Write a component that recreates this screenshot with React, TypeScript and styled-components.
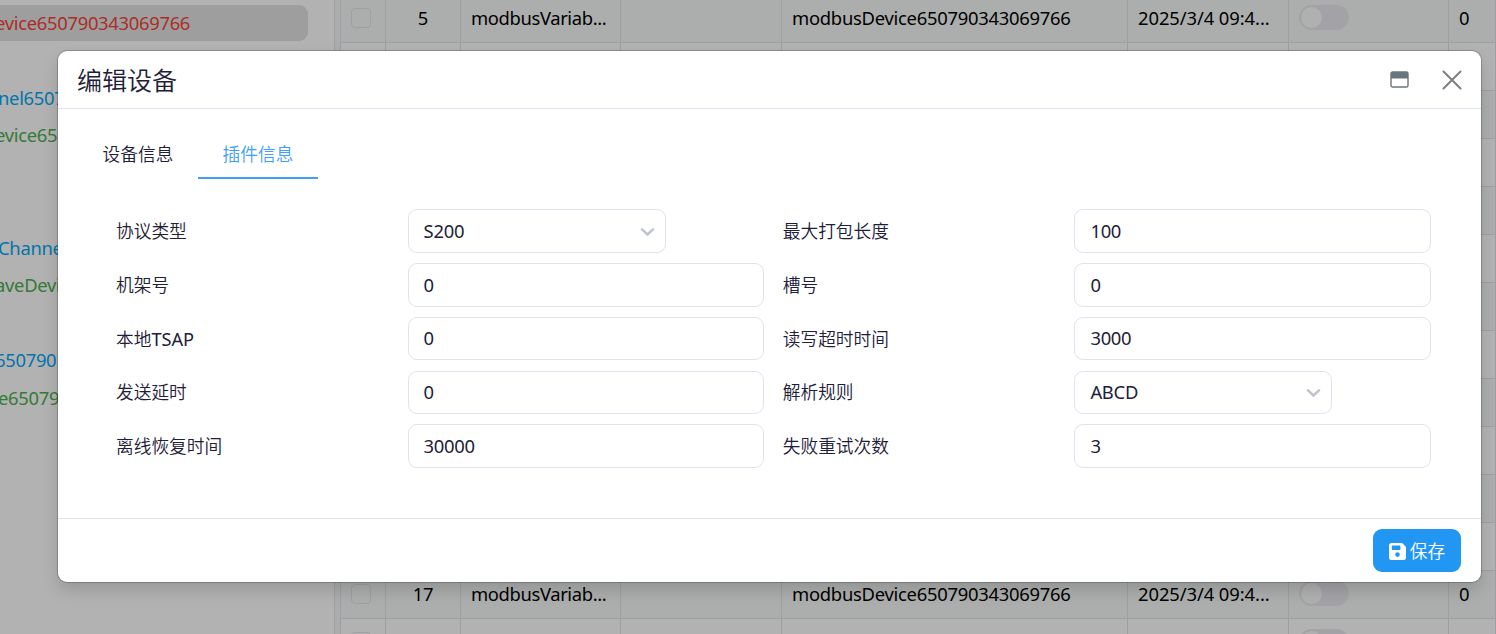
import React from 'react';
import styled, { createGlobalStyle } from 'styled-components';

const GlobalStyle = createGlobalStyle`
  * { box-sizing: border-box; }
  body {
    margin: 0;
    overflow: hidden;
    background: #fff;
    font-family: 'Noto Sans', 'Noto Sans CJK SC', sans-serif;
    font-size: 17.7px;
    color: #1d2037;
  }
`;

const Page = styled.div`
  position: relative;
  display: flex;
  width: 100vw;
  height: 634px;
  overflow: hidden;
`;

const Sidebar = styled.aside`
  width: 334px;
  padding-top: 4.5px;
  overflow: hidden;
`;

const TreeItem = styled.div<{ $color?: string; $active?: boolean }>`
  display: flex;
  align-items: center;
  width: 308px;
  height: 36.5px;
  margin-bottom: 1px;
  padding-bottom: 1px;
  border-radius: 0 9px 9px 0;
  white-space: nowrap;
  font-size: 18.4px;
  letter-spacing: -0.3px;
  color: ${(p) => p.$color ?? 'inherit'};
  background: ${(p) => (p.$active ? '#e3e3e3' : 'transparent')};
`;

const TreeText = styled.span<{ $shift: number }>`
  margin-left: ${(p) => p.$shift}px;
`;

const Splitter = styled.div`
  width: 7px;
  border: solid #e2e2ea;
  border-width: 0 1px;
  background: #f6f6fb;
`;

const Table = styled.div`
  flex: 1;
  margin-top: -5px;
  overflow: hidden;
`;

const Row = styled.div<{ $striped: boolean }>`
  display: grid;
  grid-template-columns: 45px 75px 160px 161px 346px 161px 160px 1fr;
  height: 48px;
  background: ${(p) => (p.$striped ? '#f7faf8' : '#fff')};
`;

const Cell = styled.div<{ $center?: boolean; $spacing?: number }>`
  display: flex;
  align-items: center;
  justify-content: ${(p) => (p.$center ? 'center' : 'flex-start')};
  padding: 0 ${(p) => (p.$center ? 0 : 10)}px 2px;
  border: solid #e2e2ea;
  border-width: 0 1px 1px 0;
  color: #000;
  white-space: nowrap;
  font-size: 18.4px;
  letter-spacing: ${(p) => p.$spacing ?? -0.26}px;
`;

const Checkbox = styled.span`
  width: 20px;
  height: 20px;
  margin-right: 4px;
  border: 1px solid #e2e2ea;
  border-radius: 4px;
`;

const Switch = styled.span`
  display: flex;
  align-items: center;
  width: 50px;
  height: 25px;
  padding: 2px;
  border-radius: 13px;
  background: #e9e9ef;
  &::before {
    content: '';
    width: 21px;
    height: 21px;
    border-radius: 50%;
    background: #fbfcfb;
  }
`;

const Backdrop = styled.div`
  position: absolute;
  inset: 0;
  padding: 51px 15px 52px 58px;
  background: rgba(0, 0, 0, 0.3);
`;

const Dialog = styled.section`
  display: flex;
  flex-direction: column;
  height: 531px;
  border-radius: 9px;
  background: #fff;
  box-shadow: 0 0 0 1px rgba(0, 0, 0, 0.2), 0 8px 16px rgba(0, 0, 0, 0.15);
`;

const Header = styled.header`
  display: flex;
  align-items: center;
  height: 58px;
  padding: 0 19px;
  border-bottom: 1px solid #e2e2ee;
`;

const Title = styled.h1`
  flex: 1;
  margin: 0;
  padding-bottom: 2px;
  font-size: 25px;
  font-weight: 350;
`;

const WindowIcon = styled.svg`
  width: 19px;
  height: 17px;
  margin-right: 33px;
`;

const CloseIcon = styled.svg`
  width: 20px;
  height: 20px;
`;

const Body = styled.div`
  flex: 1;
  padding: 21px 50px 0 20px;
`;

const Tabs = styled.nav`
  display: flex;
  height: 49px;
`;

const Tab = styled.div<{ $active?: boolean }>`
  display: flex;
  align-items: center;
  justify-content: center;
  width: 120px;
  padding-bottom: 1px;
  border-bottom: 2px solid ${(p) => (p.$active ? '#409eff' : 'transparent')};
  font-weight: 350;
  color: ${(p) => (p.$active ? '#409eff' : 'inherit')};
`;

const Form = styled.div`
  display: grid;
  grid-template-columns: 1fr 1fr;
  column-gap: 18.6px;
  row-gap: 10.2px;
  padding: 30.3px 0 0 38px;
`;

const Field = styled.div`
  display: grid;
  grid-template-columns: 291.6px 1fr;
  align-items: center;
  height: 43.55px;
`;

const Label = styled.span`
  padding-bottom: 2px;
  font-weight: 350;
`;

const Latin = styled.span`
  font-weight: 400;
  font-size: 18.2px;
`;

const Control = styled.div<{ $select?: boolean }>`
  display: flex;
  align-items: center;
  justify-content: space-between;
  width: ${(p) => (p.$select ? '258px' : '100%')};
  height: 100%;
  padding: 0 10px 0 15px;
  border: 1px solid #e2e2ee;
  border-radius: 9px;
  font-size: 18.4px;
  letter-spacing: -0.28px;
`;

const Value = styled.span`
  padding-bottom: 1.5px;
`;

const Chevron = styled.svg`
  width: 15px;
  height: 9px;
`;

const Footer = styled.footer`
  display: flex;
  justify-content: flex-end;
  height: 64px;
  padding: 10px 20px;
  border-top: 1px solid #e2e2ee;
`;

const SaveButton = styled.button`
  display: flex;
  align-items: center;
  justify-content: center;
  gap: 4px;
  width: 88px;
  height: 43px;
  padding: 0 0 1px;
  border: 0;
  border-radius: 9px;
  background: #2196f3;
  color: #fff;
  font: inherit;
  font-weight: 350;
`;

const SaveIcon = styled.svg`
  width: 17px;
  height: 17px;
  margin-top: 2px;
`;

const BLUE = '#03a9f4';
const GREEN = '#4caf50';

const tree: { text: string; color?: string; shift?: number; active?: boolean }[] = [
  { text: 'evice650790343069766', color: '#f44336', active: true, shift: -5 },
  { text: '' },
  { text: 'nel6507', color: BLUE, shift: -2 },
  { text: 'evice650', color: GREEN, shift: -5 },
  { text: '' },
  { text: '' },
  { text: 'Channe', color: BLUE, shift: -2 },
  { text: 'aveDevi', color: GREEN, shift: -5 },
  { text: '' },
  { text: '650790', color: BLUE, shift: -5 },
  { text: 'e65079', color: GREEN, shift: -2 },
];

const rowNumbers = Array.from({ length: 14 }, (_, i) => i + 5);

const fields = [
  { label: '协议类型', value: 'S200', select: true },
  { label: '最大打包长度', value: '100' },
  { label: '机架号', value: '0' },
  { label: '槽号', value: '0' },
  { label: '本地', latin: 'TSAP', value: '0' },
  { label: '读写超时时间', value: '3000' },
  { label: '发送延时', value: '0' },
  { label: '解析规则', value: 'ABCD', select: true },
  { label: '离线恢复时间', value: '30000' },
  { label: '失败重试次数', value: '3' },
];

export default function App() {
  return (
    <Page>
      <GlobalStyle />
      <Sidebar>
        {tree.map((t, i) => (
          <TreeItem key={i} $color={t.color} $active={t.active}>
            <TreeText $shift={t.shift ?? 0}>{t.text}</TreeText>
          </TreeItem>
        ))}
      </Sidebar>
      <Splitter />
      <Table>
        {rowNumbers.map((n) => {
          const filled = n === 5 || n === 17;
          return (
            <Row key={n} $striped={n % 2 === 1}>
              <Cell $center><Checkbox /></Cell>
              <Cell $center>{filled && n}</Cell>
              <Cell $spacing={-0.37}>{filled && 'modbusVariab...'}</Cell>
              <Cell />
              <Cell>{filled && 'modbusDevice650790343069766'}</Cell>
              <Cell $spacing={-0.08}>{filled && '2025/3/4 09:4...'}</Cell>
              <Cell><Switch /></Cell>
              <Cell>{filled && '0'}</Cell>
            </Row>
          );
        })}
      </Table>
      <Backdrop>
        <Dialog>
          <Header>
            <Title>编辑设备</Title>
            <WindowIcon viewBox="0 0 19 17">
              <rect x="1" y="1" width="17" height="15" rx="1.6" fill="#fff" stroke="#6c757d" strokeWidth="1.4" />
              <path d="M1 7.500V2.500A1.500 1.500 0 0 1 2.500 1h14A1.500 1.500 0 0 1 18 2.500V7.500z" fill="#6c757d" />
            </WindowIcon>
            <CloseIcon viewBox="0 0 20 20">
              <path d="M1.500 1.500l17 17M18.500 1.500l-17 17" stroke="#7f7f7f" strokeWidth="2" strokeLinecap="round" />
            </CloseIcon>
          </Header>
          <Body>
            <Tabs>
              <Tab>设备信息</Tab>
              <Tab $active>插件信息</Tab>
            </Tabs>
            <Form>
              {fields.map((f) => (
                <Field key={f.label}>
                  <Label>
                    {f.label}
                    {f.latin && <Latin>{f.latin}</Latin>}
                  </Label>
                  <Control $select={f.select}>
                    <Value>{f.value}</Value>
                    {f.select && (
                      <Chevron viewBox="0 0 15 9">
                        <path d="M2 2.300l5.500 5.200L13 2.300" fill="none" stroke="#c0c4cc" strokeWidth="2.500" strokeLinecap="round" />
                      </Chevron>
                    )}
                  </Control>
                </Field>
              ))}
            </Form>
          </Body>
          <Footer>
            <SaveButton>
              <SaveIcon viewBox="0 0 17 17">
                <path
                  fillRule="evenodd"
                  fill="#fff"
                  d="M2.500 0h9.800q.8 0 1.400.6l2.700 2.700q.6.6.6 1.400v9.800a2.500 2.500 0 0 1-2.500 2.500h-12A2.500 2.500 0 0 1 0 14.500v-12A2.500 2.500 0 0 1 2.500 0zM3.500 2.500a.7.7 0 0 0-.7.7v3a.7.7 0 0 0 .7.7h7.200a.7.7 0 0 0 .7-.7v-3a.7.7 0 0 0-.7-.7zM8.500 9.300a2.300 2.300 0 1 0 0 4.600 2.300 2.300 0 0 0 0-4.600z"
                />
              </SaveIcon>
              保存
            </SaveButton>
          </Footer>
        </Dialog>
      </Backdrop>
    </Page>
  );
}
